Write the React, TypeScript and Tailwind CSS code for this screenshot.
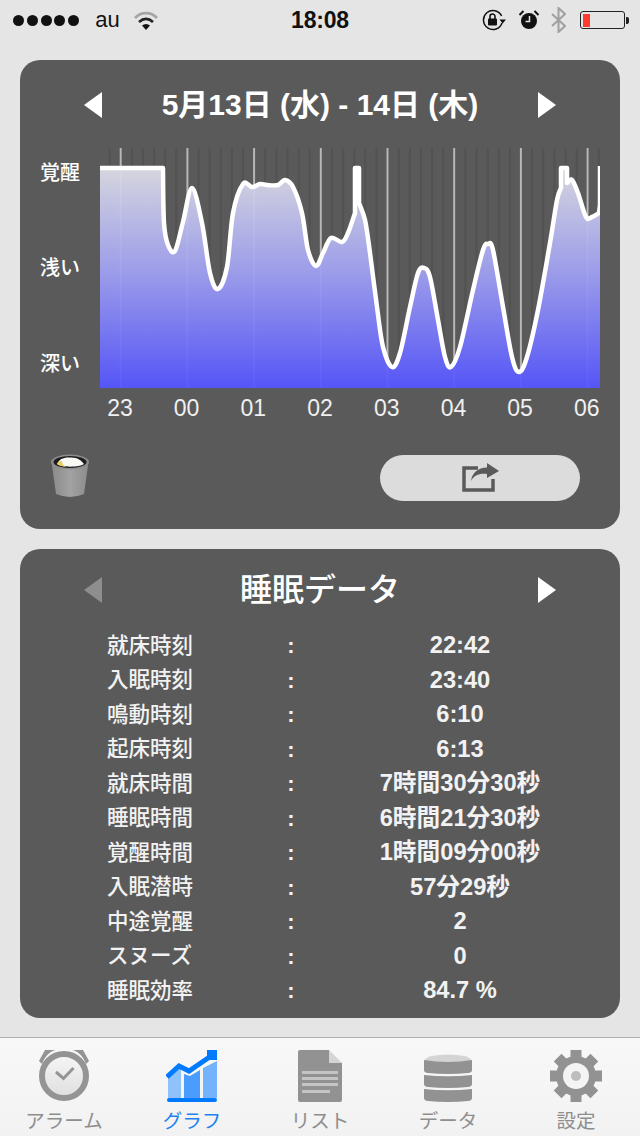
import React from "react";

type Pt = [number, number];

// sleep depth curve, split where the line has hard corners
const sleepSegments: Pt[][] = [
  [[100, 168], [163, 168]],
  [[163, 168], [164, 223], [168, 245], [175, 251], [183, 222], [192, 188], [202, 223], [210, 273], [218, 289], [227, 267], [233, 213], [243, 184], [252, 187], [260, 184], [267, 185], [278, 185], [285, 180], [293, 187], [302, 213], [308, 250], [316, 266], [323, 253], [331, 238], [342, 242], [348, 233], [355, 213]],
  [[355, 213], [355, 168], [359, 168], [359, 203]],
  [[359, 203], [365, 220], [370, 253], [377, 307], [383, 347], [392, 367], [400, 353], [410, 307], [418, 273], [424, 268], [430, 277], [438, 320], [445, 357], [451, 367], [460, 347], [473, 290], [483, 250], [488, 244], [493, 250], [503, 307], [512, 357], [519, 372], [527, 357], [538, 310], [550, 243], [557, 200], [561, 188]],
  [[561, 188], [561, 168], [567, 168], [567, 183]],
  [[567, 183], [572, 180], [578, 193], [586, 217], [592, 217], [599, 213]],
  [[599, 213], [600, 205], [600, 166]],
];

function smooth(points: Pt[]) {
  if (points.length < 5) return points.slice(1).map((p) => `L${p[0]} ${p[1]}`).join(" ");
  let d = "";
  for (let i = 0; i < points.length - 1; i++) {
    const p0 = points[i - 1] || points[i];
    const p1 = points[i];
    const p2 = points[i + 1];
    const p3 = points[i + 2] || p2;
    const c1x = p1[0] + (p2[0] - p0[0]) / 6;
    const c1y = p1[1] + (p2[1] - p0[1]) / 6;
    const c2x = p2[0] - (p3[0] - p1[0]) / 6;
    const c2y = p2[1] - (p3[1] - p1[1]) / 6;
    d += `C${c1x} ${c1y} ${c2x} ${c2y} ${p2[0]} ${p2[1]} `;
  }
  return d;
}

const linePath = "M100 168 " + sleepSegments.map(smooth).join(" ");
const areaPath = linePath + " V388 H100 Z";

const hours = ["23", "00", "01", "02", "03", "04", "05", "06"];
const hourLines = hours.map((_, i) => 120.7 + i * 66.7);
const minorLines = Array.from({ length: 45 }, (_, i) => 109.6 + i * 11.12);

const rows = [
  ["就床時刻", "22:42"],
  ["入眠時刻", "23:40"],
  ["鳴動時刻", "6:10"],
  ["起床時刻", "6:13"],
  ["就床時間", "7時間30分30秒"],
  ["睡眠時間", "6時間21分30秒"],
  ["覚醒時間", "1時間09分00秒"],
  ["入眠潜時", "57分29秒"],
  ["中途覚醒", "2"],
  ["スヌーズ", "0"],
  ["睡眠効率", "84.7 %"],
];

const Arrow = ({ dir, dim }: { dir: "left" | "right"; dim?: boolean }) => (
  <svg width="18" height="26" viewBox="0 0 18 26" className="shrink-0">
    <path
      d={dir === "left" ? "M18 0V26L0 13Z" : "M0 0V26L18 13Z"}
      fill={dim ? "#8e8e8e" : "#ffffff"}
    />
  </svg>
);

const StatusBar = () => (
  <div className="grid h-10 grid-cols-[1fr_auto_1fr] items-center text-[#111]">
    <div className="flex items-center pl-[13px]">
      <div className="flex gap-[2.800px]">
        {[0, 1, 2, 3, 4].map((i) => (
          <div key={i} className="size-[11px] rounded-full bg-[#111]" />
        ))}
      </div>
      <span className="ml-[16px] text-[22px] leading-none">au</span>
      <svg width="24" height="19" viewBox="0 0 24 19" className="ml-[14px]">
        <path d="M1 7C7 0.500 17 0.500 23 7" fill="none" stroke="#a5a5a5" strokeWidth="2.6" />
        <path d="M5 11C9.500 7 14.500 7 19 11" fill="none" stroke="#222" strokeWidth="2.6" />
        <path d="M8 14.500C10.500 12.500 13.500 12.500 16 14.500L12 19Z" fill="#111" />
      </svg>
    </div>
    <span className="text-[23px] font-bold leading-none tracking-[-0.2px]">18:08</span>
    <div className="flex items-center justify-end pr-[11px]">
      {/* rotation lock */}
      <svg width="24" height="22" viewBox="0 0 24 22">
        <path d="M20 14A9.500 9.500 0 1 1 19.600 7" fill="none" stroke="#111" strokeWidth="1.500" />
        <path d="M17.500 10.500H24L20.700 14.500Z" fill="#111" />
        <rect x="6" y="9.500" width="9" height="7" rx="1" fill="#111" />
        <path d="M8 10V7.500a2.500 2.500 0 0 1 5 0V10" fill="none" stroke="#111" strokeWidth="1.600" />
      </svg>
      {/* alarm */}
      <svg width="20" height="20" viewBox="0 0 20 20" className="ml-[13px]">
        <circle cx="10" cy="11" r="8" fill="#111" />
        <path d="M0.500 5L4.500 1M15.500 1L19.500 5" stroke="#111" strokeWidth="2" />
        <path d="M10.500 6V11.500H6.500" fill="none" stroke="#e5e5e5" strokeWidth="1.500" />
      </svg>
      {/* bluetooth */}
      <svg width="15" height="26" viewBox="0 0 15 26" className="ml-[12px]">
        <path d="M1 7L14 19L7.500 25V1L14 7L1 19" fill="none" stroke="#a0a0a0" strokeWidth="2" />
      </svg>
      {/* battery */}
      <div className="ml-[14px] flex items-center">
        <div className="h-[18px] w-[45px] rounded-[3px] border border-[#222] p-[1.500px]">
          <div className="h-full w-[7px] bg-[#ff3b30]" />
        </div>
        <div className="ml-[1px] h-[7px] w-[3px] rounded-r-[2px] bg-[#222]" />
      </div>
    </div>
  </div>
);

const SleepChart = () => (
  <svg width="500" height="240" viewBox="100 148 500 240" className="block">
    <defs>
      <linearGradient id="depth" gradientUnits="userSpaceOnUse" x1="0" y1="168" x2="0" y2="388">
        <stop offset="0" stopColor="#dcdce6" />
        <stop offset="0.5" stopColor="#9c9cf2" />
        <stop offset="1" stopColor="#5555ff" />
      </linearGradient>
    </defs>
    {minorLines.map((x) => (
      <line key={x} x1={x} x2={x} y1="148" y2="388" stroke="#525252" strokeWidth="2" />
    ))}
    {hourLines.map((x) => (
      <line key={x} x1={x} x2={x} y1="148" y2="388" stroke="#b8b8b8" strokeWidth="2" />
    ))}
    <path d={areaPath} fill="url(#depth)" fillOpacity="0.95" />
    <path d={linePath} fill="none" stroke="#ffffff" strokeWidth="4.500" strokeLinejoin="round" />
  </svg>
);

const TrashCan = () => (
  <svg width="38" height="44" viewBox="0 0 38 44">
    <defs>
      <linearGradient id="can" x1="0" y1="0" x2="1" y2="0">
        <stop offset="0" stopColor="#8a8a8a" />
        <stop offset="0.5" stopColor="#a2a2a2" />
        <stop offset="1" stopColor="#8c8c8c" />
      </linearGradient>
    </defs>
    <path d="M0.500 8L5 40Q19 46 33 40L37.500 8Z" fill="url(#can)" />
    <ellipse cx="19" cy="8" rx="19" ry="7.500" fill="#8c8c8c" />
    <ellipse cx="19" cy="8" rx="16.500" ry="6" fill="#1c1c1c" />
    <path d="M6 10C8 5 13 3 19 3.500C26 3 30 6 33 10C29 13.500 10 13.500 6 10Z" fill="#f8f8f4" />
    <path d="M6 10C7 8 8.500 7 11 7C11 9 12 11.500 15 12.800C11 12.500 8 11.500 6 10Z" fill="#e8d060" />
  </svg>
);

const ShareIcon = () => (
  <svg width="38" height="30" viewBox="0 0 38 30">
    <path d="M16 5H2V27H31V16" fill="none" stroke="#5a5a5a" strokeWidth="3.500" />
    <path d="M25 0L37 8L25 15V11C18 10 12 12 9 18C10 10 16 4.500 25 4.500Z" fill="#5a5a5a" />
  </svg>
);

const AlarmIcon = () => (
  <svg width="52" height="52" viewBox="0 0 52 52">
    <defs>
      <linearGradient id="face" x1="0" y1="0" x2="0" y2="1">
        <stop offset="0" stopColor="#f6f6f6" />
        <stop offset="1" stopColor="#dedede" />
      </linearGradient>
    </defs>
    <path d="M1 11L7 0H17Q8 3 4 14Z" fill="#949494" />
    <path d="M51 11L45 0H35Q44 3 48 14Z" fill="#949494" />
    <circle cx="26" cy="26" r="22" fill="url(#face)" stroke="#949494" strokeWidth="6" />
    <path d="M18 22L25.500 28.500L35.500 18" fill="none" stroke="#949494" strokeWidth="3" />
  </svg>
);

const GraphIcon = () => (
  <svg width="52" height="52" viewBox="0 0 52 52">
    <path d="M2 28L13 18L15 19V48H2Z" fill="#90c2fa" />
    <path d="M18 24L24 26L34 20V48H18Z" fill="#4a9cff" />
    <path d="M37 18L51 11V48H37Z" fill="#74b3fb" />
    <rect x="1" y="48" width="50" height="4" rx="2" fill="#007aff" />
    <path d="M1 27L13 16L23 21L45 6" fill="none" stroke="#007aff" strokeWidth="5" />
    <rect x="41" y="0" width="10" height="10" fill="#007aff" />
  </svg>
);

const DocIcon = () => (
  <svg width="44" height="52" viewBox="0 0 44 52">
    <path d="M2 0H31V13H44V50Q44 52 42 52H2Q0 52 0 50V2Q0 0 2 0Z" fill="#929292" />
    <path d="M31 0L44 13H31Z" fill="#d4d4d4" />
    <rect x="4" y="21" width="36" height="3" fill="#c4c4c4" />
    <rect x="4" y="27" width="36" height="3" fill="#c4c4c4" />
    <rect x="4" y="33" width="36" height="3" fill="#c4c4c4" />
    <rect x="4" y="40" width="28" height="3" fill="#c4c4c4" />
  </svg>
);

const DataIcon = () => (
  <svg width="48" height="48" viewBox="0 0 48 48">
    <ellipse cx="24" cy="6" rx="23" ry="5.500" fill="#d4d4d4" />
    <path d="M0 6Q24 10 48 6V16Q48 18.500 44 19Q24 21 4 19Q0 18.500 0 16Z" fill="#929292" />
    <path d="M0 21Q24 23.500 48 21V30Q48 32.500 44 33Q24 35 4 33Q0 32.500 0 30Z" fill="#929292" />
    <path d="M0 35Q24 37.500 48 35V44Q48 46.500 44 47Q24 49 4 47Q0 46.500 0 44Z" fill="#929292" />
  </svg>
);

const GearIcon = () => (
  <svg width="52" height="52" viewBox="0 0 52 52">
    {[0, 45, 90, 135].map((a) => (
      <rect key={a} x="20.500" y="0" width="11" height="52" fill="#929292" transform={`rotate(${a} 26 26)`} />
    ))}
    <circle cx="26" cy="26" r="20" fill="#929292" />
    <circle cx="26" cy="26" r="13" fill="#f4f4f4" />
    <circle cx="26" cy="26" r="5" fill="#bdbdbd" />
  </svg>
);

const tabs = [
  { label: "アラーム", icon: <AlarmIcon /> },
  { label: "グラフ", icon: <GraphIcon />, active: true },
  { label: "リスト", icon: <DocIcon /> },
  { label: "データ", icon: <DataIcon /> },
  { label: "設定", icon: <GearIcon /> },
];

export default function App() {
  return (
    <div className="flex h-[1136px] w-[640px] flex-col overflow-hidden bg-[#e5e5e5] font-['Liberation_Sans','Noto_Sans_CJK_JP',sans-serif]">
      <StatusBar />

      <div className="mt-5 flex flex-col gap-5 px-5">
        {/* graph card */}
        <section className="h-[469px] rounded-[20px] bg-[#5a5a5a] text-white">
          <div className="flex h-[88px] items-center justify-between px-[64px] pt-[2px]">
            <Arrow dir="left" />
            <h1 className="text-[30px] font-bold leading-none">5月13日 (水) - 14日 (木)</h1>
            <Arrow dir="right" />
          </div>

          <div className="flex">
            <div className="flex h-[240px] w-20 flex-col justify-between pb-[12px] pl-5 pt-[12.500px] text-[20px] font-medium leading-6">
              <span>覚醒</span>
              <span>浅い</span>
              <span>深い</span>
            </div>
            <SleepChart />
          </div>

          <div className="ml-[66.600px] grid h-10 w-[533.600px] grid-cols-8 items-center text-center text-[23px] leading-none text-[#f0f0f0]">
            {hours.map((h) => (
              <span key={h}>{h}</span>
            ))}
          </div>

          <div className="flex items-start justify-between pl-[31px] pr-10 pt-[27px]">
            <div className="-mt-px">
              <TrashCan />
            </div>
            <button className="flex h-[46px] w-[200px] items-center justify-center rounded-[23px] bg-[#dcdcdc] pl-[2px]">
              <ShareIcon />
            </button>
          </div>
        </section>

        {/* sleep stats card */}
        <section className="h-[469px] rounded-[20px] bg-[#5a5a5a] text-white">
          <div className="flex h-[72px] items-center justify-between px-[64px] pt-[10px]">
            <Arrow dir="left" dim />
            <h2 className="text-[32px] font-medium leading-none">睡眠データ</h2>
            <Arrow dir="right" />
          </div>
          <div className="flex flex-col pt-[8px]">
            {rows.map(([label, value]) => (
              <div key={label} className="grid h-[34.500px] grid-cols-[172px_24px_314px] items-center pl-[87px] leading-none">
                <span className="text-[21.500px] font-medium text-[#f2f2f2]">{label}</span>
                <span className="text-center text-[22px] font-bold text-[#f2f2f2]">:</span>
                <span className="text-center text-[23.700px] font-bold text-[#f2f2f2]">{value}</span>
              </div>
            ))}
          </div>
        </section>
      </div>

      {/* tab bar */}
      <nav className="mt-[19px] grid h-[99px] grid-cols-5 border-t border-[#aeaeae] bg-gradient-to-b from-[#f8f8f8] to-[#f2f2f2]">
        {tabs.map((t) => (
          <div key={t.label} className="flex flex-col items-center">
            <div className="flex h-[64px] items-end pb-0">{t.icon}</div>
            <span className={t.active ? "mt-[10px] text-[19.500px] leading-[19px] text-[#1e82f0]" : "mt-[10px] text-[19.500px] leading-[19px] text-[#8e8e8e]"}>
              {t.label}
            </span>
          </div>
        ))}
      </nav>
    </div>
  );
}
